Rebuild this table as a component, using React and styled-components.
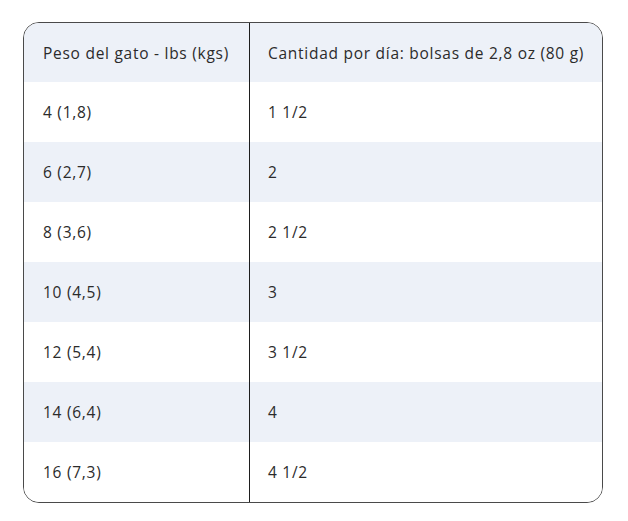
import styled, { createGlobalStyle } from "styled-components";

const GlobalStyle = createGlobalStyle`
  body {
    margin: 0;
    background: #ffffff;
    font-family: "Open Sans", "Liberation Sans", sans-serif;
    color: #2b2b2b;
  }
`;

const Page = styled.div`
  padding: 22px 25px 0 23px;
`;

const TableBox = styled.div`
  border: 1px solid #4a4a4a;
  border-radius: 16px;
  overflow: hidden;
`;

const Table = styled.table`
  width: 100%;
  border-collapse: separate;
  border-spacing: 0;
  table-layout: fixed;
`;

const Row = styled.tr`
  background: ${({ shaded }) => (shaded ? "#edf1f8" : "#ffffff")};
`;

const Cell = styled.td`
  height: ${({ head }) => (head ? "59px" : "60px")};
  padding: 0 0 0 ${({ first }) => (first ? "19px" : "18px")};
  width: ${({ first }) => (first ? "206px" : "auto")};
  border-right: ${({ first }) => (first ? "1px solid #1e1e1e" : "none")};
  vertical-align: middle;
  text-align: left;
  font-size: 15.5px;
  line-height: 20px;
  font-weight: 400;
  letter-spacing: 0.73px;
  white-space: nowrap;
  color: #2b2b2b;
`;

const rows = [
  ["4 (1,8)", "1 1/2"],
  ["6 (2,7)", "2"],
  ["8 (3,6)", "2 1/2"],
  ["10 (4,5)", "3"],
  ["12 (5,4)", "3 1/2"],
  ["14 (6,4)", "4"],
  ["16 (7,3)", "4 1/2"],
];

const App = () => {
  return (
    <>
      <GlobalStyle />
      <Page>
        <TableBox>
          <Table>
            <thead>
              <Row shaded>
                <Cell as="th" head first>
                  Peso del gato - lbs (kgs)
                </Cell>
                <Cell as="th" head>
                  Cantidad por día: bolsas de 2,8 oz (80 g)
                </Cell>
              </Row>
            </thead>
            <tbody>
              {rows.map((r, i) => (
                <Row key={i} shaded={i % 2 === 1}>
                  <Cell first>{r[0]}</Cell>
                  <Cell>{r[1]}</Cell>
                </Row>
              ))}
            </tbody>
          </Table>
        </TableBox>
      </Page>
    </>
  );
};

export default App;
